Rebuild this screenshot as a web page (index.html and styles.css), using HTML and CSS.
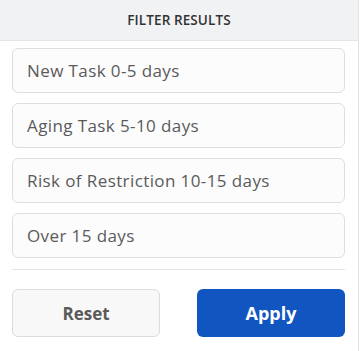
FILE: index.html
```html
<!DOCTYPE html>
<html>
<head>
<meta charset="utf-8">
<link rel="stylesheet" href="styles.css">
</head>
<body>
<div class="panel">
  <div class="header">FILTER RESULTS</div>
  <div class="list">
    <div class="item">New Task 0-5 days</div>
    <div class="item">Aging Task 5-10 days</div>
    <div class="item">Risk of Restriction 10-15 days</div>
    <div class="item">Over 15 days</div>
  </div>
  <div class="sep"></div>
  <div class="actions">
    <div class="btn reset">Reset</div>
    <div class="btn apply">Apply</div>
  </div>
</div>
</body>
</html>
```
FILE: styles.css
```css
html, body { margin: 0; padding: 0; background: #fff; }
body { font-family: "Open Sans", "Lato", sans-serif; width: 361px; height: 351px; overflow: hidden; }
.panel {
  width: 358px;
  height: 351px;
  border-right: 1px solid #e2e2e2;
}
.header {
  height: 41px;
  background: #f1f2f3;
  border-bottom: 1px solid #e4e4e4;
  display: flex;
  align-items: center;
  justify-content: center;
  font-size: 13.5px;
  font-weight: 600;
  color: #333;
  letter-spacing: 0.1px;
  box-sizing: border-box;
}
.list {
  padding: 7px 13px 0 12px;
  display: flex;
  flex-direction: column;
  gap: 10px;
}
.item {
  height: 45px;
  box-sizing: border-box;
  border: 1px solid #dedede;
  border-radius: 6px;
  background: #fcfcfc;
  display: flex;
  align-items: center;
  padding-left: 14px;
  font-size: 17px;
  letter-spacing: 0.4px;
  color: #5a5a5a;
}
.sep {
  margin: 11px 13px 0 12px;
  height: 1px;
  background: #e4e4e4;
}
.actions {
  display: grid;
  grid-template-columns: 148px 148px;
  justify-content: space-between;
  padding: 19px 13px 0 12px;
}
.btn {
  height: 48px;
  box-sizing: border-box;
  border-radius: 6px;
  display: flex;
  align-items: center;
  justify-content: center;
  font-size: 17px;
  font-weight: 700;
}
.reset {
  background: #f8f8f8;
  border: 1px solid #dcdcdc;
  color: #5a5a5a;
}
.apply {
  background: #1155c0;
  color: #fff;
  font-size: 18px;
}
```
